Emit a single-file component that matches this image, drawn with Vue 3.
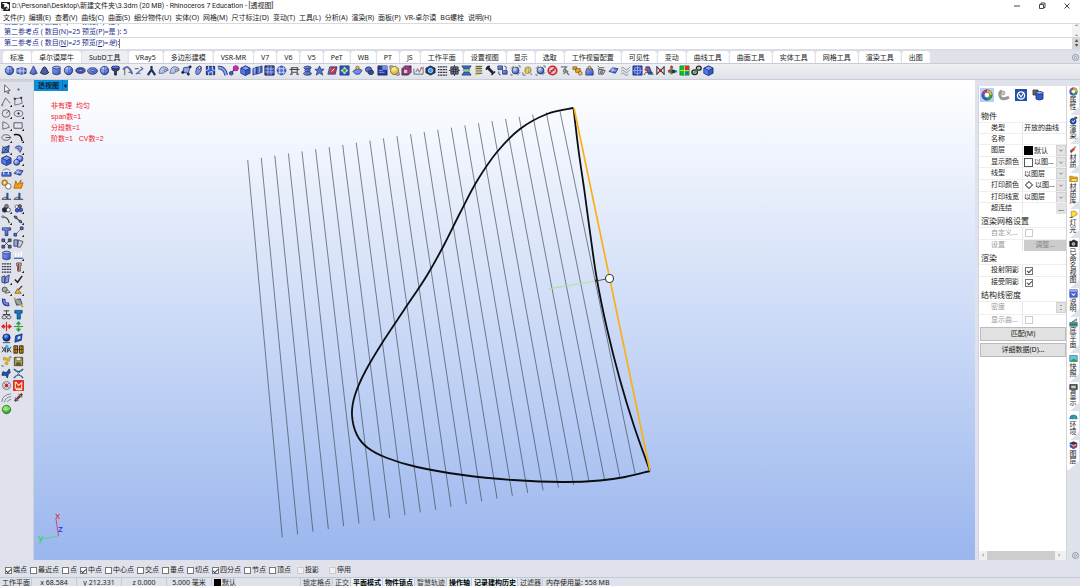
<script setup>
const menus = ['文件(F)', '编辑(E)', '查看(V)', '曲线(C)', '曲面(S)', '细分物件(U)', '实体(O)', '网格(M)', '尺寸标注(D)', '变动(T)', '工具(L)', '分析(A)', '渲染(R)', '面板(P)', 'VR-卓尔谟', 'BG螺栓', '说明(H)']
const tabs = ['标准', '卓尔谟犀牛', 'SubD工具', 'VRay5', '多边形建模', 'VSR-MR', 'V7', 'V6', 'V5', 'PeT', 'WB', 'PT', 'JS', '工作平面', '设置视图', '显示', '选取', '工作视窗配置', '可见性', '变动', '曲线工具', '曲面工具', '实体工具', '网格工具', '渲染工具', '出图']

const corner = '<path d="M12 9.5V12H9.5z" fill="#222"/>'
const ln = (d, c = '#333', w = 1) => `<path d="${d}" fill="none" stroke="${c}" stroke-width="${w}"/>`
const fl = (d, f = 'url(#gb)', s = '#1c2c66', w = 0.8) => `<path d="${d}" fill="${f}" stroke="${s}" stroke-width="${w}"/>`
const ci = (x, y, r, f = 'url(#gs)', s = '#1c2c66', w = 0.8) => `<circle cx="${x}" cy="${y}" r="${r}" fill="${f}" stroke="${s}" stroke-width="${w}"/>`
const el = (x, y, a, b, f = 'url(#gb)', s = '#1c2c66', w = 0.8) => `<ellipse cx="${x}" cy="${y}" rx="${a}" ry="${b}" fill="${f}" stroke="${s}" stroke-width="${w}"/>`

const icons = {
  ball: ci(6, 6, 4.6) + ln('M2 4.5Q6 7 10 4.5M6 1.5V10.5', '#33458c', 0.5),
  slab: fl('M1 4Q6 2 11 4V9Q6 11 1 9z') + ln('M1 6.5H11M4.5 3V10M8 3V10', '#dfe6ff', 0.8),
  cone: fl('M6 1L10 9Q6 12 2 9z'),
  conecut: fl('M4.5 3Q6 1 7.5 3L10.5 8.5Q6 12 1.5 8.5z', '#4a5ea8', '#151f4a', 1),
  cyl: fl('M2 2.5V9.5Q6 12 10 9.5V2.5z') + el(6, 2.8, 4, 1.5, '#9fb2ff'),
  ring: el(6, 6, 5, 3, '#4560c8', '#1a1f3c', 1) + el(6, 6, 2, 0.8, '#fff'),
  torus: el(6, 6.5, 5.4, 3.6) + el(6, 6, 2.4, 1, '#c7d0f5'),
  funnel: fl('M2 2H10V5L7 7V11H5V7L2 5z', '#33437e', '#111') + el(6, 2.5, 4, 1.5, '#5577e8'),
  arc: ln('M1 5Q5 0 8 4T11 10', '#5a6cae', 2) + ln('M3 4V11M7 8H11', '#555'),
  bridge: ln('M1 4H5M3 9H7M7 2L10 4L7 6', '#444') + ln('M2 10L9 4', '#5577dd', 1.4),
  legs: ln('M6 1V5L2 11M6 5L10 11', '#26325e', 2.4),
  patch: fl('M1 9Q2 1 7 2T11 6Q8 5 6 9z', '#b6c4f0', '#45558f') + ci(8, 6, 1.4, '#d8cfa0', '#555'),
  net: fl('M3 3L10 2L8 9L2 8z', '#8fa6f2', '#222c55') + ci(2, 8, 1.3, '#222') + ci(10, 2, 1.2, '#222') + ci(8, 10, 1.2, '#222'),
  tube: fl('M4 3Q7 0 9 2V6Q7 11 4 10.5Q2 9 4 3z', '#8297e6') + el(7, 3, 1.6, 1.6, '#dfe5ff'),
  grid: fl('M1.5 1.5H10.5V10.5H1.5z', '#3558c4', '#111d55', 1) + ln('M4 1V5L1 6M8 1V5L11 6M4 11V8L8 7V11', '#d6e0ff', 1),
  pipe: ln('M1 3Q8 2 10 11', '#2d3d80', 4) + ln('M1 3Q8 2 10 11', '#90a6ff', 2),
  magenta: ci(3.5, 9, 2, '#4d63cc') + ln('M4 8L8 4', '#444', 1.4) + ci(8.5, 3.5, 2.8, '#d22bb8', '#801070'),
  cube: fl('M6 1L11 3.5V9L6 11.5L1 9V3.5z', '#3355cc') + fl('M6 1L11 3.5L6 6L1 3.5z', '#7f9dff') + fl('M6 6V11.5L1 9V3.5z', '#5577ee', '#1c2c66', 0.5),
  boxes: fl('M1 4L6 2V9L1 11z') + fl('M5 3L11 1V8L5 10z', '#4d68c8') + ln('M8 2V9M3 3V10', '#cdd8ff', 0.7),
  boxgrid: fl('M1 1H11V11H1z', '#3a54b4', '#151c40', 1) + ln('M1 4.3H11M1 7.6H11M4.3 1V11M7.6 1V11', '#bdcbff', 0.8),
  globe: ci(6, 6, 4.8, '#5670d8') + ln('M1.5 4H10.5M1.5 8H10.5M4 1.5V10.5M8 1.5V10.5', '#e0e7ff', 0.8),
  car: ln('M0.5 5H11.5M2 3H10M3 3V10M9 3V10M3 8H9M1 10H4M8 10H11', '#444', 1.1),
  stack: el(6, 3, 4, 1.8) + el(6, 6, 3, 1.6) + el(6, 9.3, 4.4, 1.8),
  star: fl('M6 1L7.4 4.5L11 4.7L8.3 7L9.5 11L6 8.8L2.5 11L3.7 7L1 4.7L4.6 4.5z', '#5874dc'),
  redpane: fl('M3 2H11L9 10H1z', '#7186d8') + fl('M5 3H10L8 9H3z', '#e03a4c', '#a02030') + ln('M5 7L8 4', '#fff'),
  greenpane: fl('M1 1H11V11H1z', '#2f55c8') + fl('M6 2L8 5L10 6L7.5 7.5L6 10L4.5 7.5L2 6L4.5 5z', '#a6e070', '#fff', 0.5) + ci(6, 6, 1.3, '#1c8c38', 'none'),
  teapot: fl('M1 7Q6 2 11 6L8 10H4z', '#6f8af2') + ci(6, 3, 1.8, '#f0c030', '#806010'),
  lens: el(5, 5, 3.5, 3, '#5a72c8') + el(7.5, 8, 3, 2.5, '#39488b'),
  monitor: fl('M1 1H11V11H1z', '#253f98', '#151d44') + fl('M6 1H11V5H6z', '#6c8cff', '#aac', 0.4) + ln('M2 6H6M2 8H8', '#a9bcff', 0.8),
  yball: ci(6, 6, 4.5, 'url(#gy)', '#6a5610') + ln('M1 1V4M1 1H4M11 8V11H8', '#333', 0.8),
  magbox: fl('M1 4L4 1H11V8L8 11H1z', '#b03c9c', '#222') + fl('M2.5 4.5H7.5V9.5H2.5z', '#f0b8dc', '#222') + ln('M8 4L11 1', '#222', 0.8),
  curveplot: ln('M1 4V10H11V2M3 8L5 4L7 8L9 3', '#667') + ci(9.5, 3.5, 1.2, '#d66', 'none'),
  hex: fl('M6 1L11 3.5V8.5L6 11L1 8.5V3.5z', '#203f7c', '#111') + ci(6, 6, 2.4, '#3da0e8', '#d0e8ff'),
  dots: ln('M1 2H11M1 5H11M1 8H11M1 11H11', '#334', 1.5) + ln('M3 1V12M6 1V12M9 1V12', '#eef0f6', 0.6),
  gridball: fl('M2 2H10V10H2z', '#7383a6', '#222') + ln('M2 4.6H10M2 7.3H10M4.6 2V10M7.3 2V10', '#222', 0.8) + ln('M0 6H2M10 6H12M6 0V2M6 10V12', '#333'),
  layers: fl('M1 1H11L9 4H3z', '#4766d0') + fl('M2 5H10L9 7H3z', '#7fe0a0', '#3a8850', 0.5) + fl('M3 8H9L11 11H1z', '#4766d0'),
  list: ln('M3 1.5H10M3 4H10M3 6.5H10M3 9H10', '#333') + ln('M2 2.7H9M2 5.2H9M2 7.7H9M2 10.2H7', '#d8c24a'),
  wrench: ln('M2 2L9 9', '#223', 3) + ln('M1 5L5 1', '#223', 2) + ln('M7 11L11 7', '#223', 1.6),
  network: fl('M1 1H6V5H1z') + fl('M6 6H11V10H6z') + ln('M8 1Q11 1 10 5M4 11Q1 11 2 7', '#445'),
  selball: ci(6, 6, 3.8) + ln('M1 4L4 1M8 11L11 8M1 10V11H3M9 1H11V3', '#444', 0.8) + fl('M5 2L7 4L5 6z', '#f0d84a', 'none'),
  selyel: ci(6.5, 5.5, 3.5, 'url(#gy)', '#777') + fl('M4 5L7 3V9H4z', '#f4dc40', '#887020', 0.5) + ln('M1 8V11H4M10 9V11', '#444', 0.8),
  no: ci(6, 6, 4.6, '#e8c8cc', '#d02020', 1.8) + ln('M3 9L9 3', '#d02020', 1.6) + ln('M4 6H8', '#555', 1),
  filter: ln('M2 2H8L5 6V8M6 4L10 8M8 6L5 10M8 8L11 11', '#777', 1.5),
  bolt: fl('M1 2H5V5H1z', '#f0a820', '#785010') + fl('M4 4H9V8H4z', '#f0a820', '#785010') + ci(9, 9, 2, '#f8c850', '#785010'),
  hatbox: fl('M2 7L3 4H9L10 7V11H2z') + ci(6, 3, 1.7, '#e0c030', '#555'),
  bag: ln('M2 1L4 3H9M2 4L9 6M3 5V10H8L10 6z', '#555', 1) + ci(6, 8, 1.3, '#8899dd', '#444'),
  tiles: fl('M1 7L5 3L11 4L8 9z') + ln('M3 5L9 6.5M6 3.4L4 8', '#dde5ff', 0.7),
  waves: ln('M1 4Q3 1 5 4T9 4L11 2M1 7Q3 4 5 7T9 7L11 5M1 10Q3 7 5 10T9 10', '#7c8797', 1),
  target: fl('M1 1H11V11H1z', '#2f4fbd', '#1b2868') + ln('M6 1V11M1 6H11M3 3H9V9H3z', '#a8baff', 0.8),
  angle: fl('M3 2H7L10 10H6z', '#4c68c8') + ln('M1 11L3 8H10L11 11', '#333', 0.8) + ci(3.5, 5, 1.8, '#e03828', 'none'),
  cross: ln('M2 2L10 10M10 2L2 10M2 1V11M10 1V11', '#333', 1.1) + ci(6, 6, 1.6, '#d02030', 'none'),
  gumball: ln('M5 1V10M1 7H11', '#1d9c5c', 2.4) + fl('M3 3L5 0L7 3z', '#e02828', 'none') + fl('M1 6L4 4V10z', '#e02828', 'none') + ci(7, 7, 2, '#28344c', 'none'),
  map: fl('M1 1H11V11H1z', '#18b830', '#083') + fl('M6 1H11V6H6z', '#e02828', 'none') + ln('M1 6H11M6 1V11', '#d8ff60', 0.8) + fl('M7 8H10V10H7z', '#2060e0', 'none'),
  chain: el(4, 8, 3, 2.6, '#ccc', '#222', 1.4) + el(8.5, 3.5, 2.6, 2.2, '#ccc', '#222', 1.4) + ln('M3 9L7 5', '#38a040', 1.6),
  cursor: fl('M4 1V9L6 7.5L7.5 10.5L8.7 10L7.3 7H10z', '#fff', '#333'),
  point: '<rect x="5" y="5" width="2" height="2" fill="#555"/>',
  poly: ln('M1 10L5 2L10 8', '#444', 0.8) + ci(1.5, 10, 0.8, '#fff', '#333', 0.6) + corner,
  cpoly: ln('M2 10V3L9 2L10 8z', '#444', 0.7) + ci(2, 3, 0.9, '#333') + ci(9, 2, 0.9, '#333') + corner,
  circle: ci(5.5, 6, 4.2, 'none', '#444', 0.8) + ln('M5.5 6L9 3', '#333', 0.8) + corner,
  ellipse: el(6, 6, 4.6, 3.3, 'none', '#444', 0.8) + ci(6, 6, 0.9, '#333') + corner,
  arctri: ln('M2 10V2Q8 3 9 8z', '#444', 0.8) + corner,
  rect: ln('M1 3H10V9H1z', '#444', 0.9) + corner,
  oval: el(5.5, 6, 4.4, 3, 'none', '#444', 0.8) + ln('M5 6H11', '#333', 0.8) + corner,
  fillet: ln('M1 3Q9 1 10 10', '#111', 1.6) + corner,
  surf: fl('M2 4L9 2L8 9L1 10z') + ln('M1 2L10 10M9 1L2 10', '#223', 0.6) + corner,
  drape: fl('M2 4Q6 0 10 4L8 9Q6 4 2 4z', '#7e97e8') + ln('M2 3L8 10', '#b88', 0.7) + corner,
  blob: ci(7.5, 4, 3.3) + ci(4, 8, 3.3) + corner,
  spring: ln('M2 4Q6 0 10 4', '#777') + fl('M1 6H11V10H1z', '#4e70e8') + ln('M3 5V8M8 5V8', '#fff'),
  gears: ci(4, 4, 3, '#f2b030', '#6a4a10') + ci(8, 8, 3, '#ffffff', '#444') + ci(4, 4, 1, '#fff', 'none'),
  fire: fl('M1 10L3 2L5 6L9 1L8 5L11 4L9 10z', '#f2a010', '#9a5800'),
  trim: ln('M1 9H11', '#444', 1.2) + ln('M7 9V2', '#2c4aa0', 2.2) + ln('M1 9Q4 5 7 8', '#333', 0.8),
  hub: ci(4, 7.5, 2.6, '#222b40') + ci(8, 7.5, 2.2, '#fff', '#223') + ci(6, 3.5, 2, '#888', '#333') + corner,
  hub2: ci(4, 4, 1.8, '#fff', '#445') + ci(7.5, 3.5, 1.8, '#667', '#334') + ci(4.5, 8, 2, '#3c5ce0') + ci(8.5, 7.5, 2, '#3c5ce0') + corner,
  curve1: ln('M1 3Q8 3 9 10', '#333', 1.3) + ci(2, 3, 1.1, '#fff', '#333') + corner,
  curve2: ln('M1 2L10 10', '#333', 1.3) + ci(3, 3.5, 1.3, '#777') + ci(8, 8, 1.3, '#777') + corner,
  tee: fl('M1.5 2H10.5V4.5H7.5V10.5H4.5V4.5H1.5z'),
  pair: ln('M3 9L9 3', '#777') + fl('M1 8H4V11H1z', '#4f6bd8') + fl('M8 1H11V4H8z', '#4f6bd8') + corner,
  array: fl('M1 1H4V4H1zM8 1H11V4H8zM1 8H4V11H1zM8 8H11V11H8z', '#556bb8', '#223') + ln('M3 3L9 9M9 3L3 9', '#334', 0.8),
  fold: fl('M1 2H5V9H1z', '#9aa6c8') + fl('M6 2L11 4L8 10H5z', '#c8d0e8', '#334'),
  cards: fl('M1 3L4 2V10L1 9z', '#8fa0d8') + fl('M5 3L9 1L8 9L4 10z', '#7d96f0') + corner,
  comb: ln('M3 8V2M6 8V3M9 8V2', '#fff', 1.4) + ln('M1 9H11', '#4664b8', 1.4) + corner,
  tower: fl('M4 1H9V4H8V10H5V4H4z', '#b8b0aa', '#444') + ln('M6 2V9', '#c82828', 1.4) + corner,
  check: ln('M2 6L5 9L10 2', '#222', 1.6),
  shells: ci(4, 5, 2.7, '#aaa', '#333') + fl('M5 9Q6 3 10 8z', '#e8e8e8', '#333') + corner,
  paint: fl('M2 9L5 4L9 9z', '#f0b430', '#775010') + ln('M6 5L10 1', '#333', 1.4) + corner,
  bend: ln('M3 2Q2 9 9 8', '#2a3c96', 4) + ln('M3 3Q3 8 8 8', '#7b92ee', 1.6),
  sheet: fl('M2 3L8 2L10 8L4 9z', '#7b9ad8') + ln('M1 1L11 11', '#b8a850', 1.8),
  rig: ln('M3 2H9M6 2V6M2 6H10', '#333', 1) + el(3.5, 9, 2.4, 1.8, 'none', '#333') + el(8.5, 9, 2.4, 1.8, 'none', '#333'),
  hammer: fl('M2 1.5H10V4.5H8V11H4.5V4.5H2z', '#1976c4', '#0a3a70'),
  redarr: fl('M0 6L3.5 3V5H5V7H3.5V9zM12 6L8.5 3V5H7V7H8.5V9z', '#e02020', 'none') + ln('M6 1V11', '#e02020', 1.2),
  greenarr: fl('M6 0L9 3.5H7V5H5V3.5H3zM6 12L9 8.5H7V7H5V8.5H3z', '#2e9e3c', 'none') + ln('M1 6H11', '#2e9e3c', 1.2),
  darkball: ci(6, 5, 4, 'url(#gd)', '#0a1a50') + ln('M2 10.5H10', '#444'),
  bluebox: fl('M3 3L10 1L9 8L2 10z', '#2454c4', '#0c2464') + fl('M5 4L8 3V6L5 7z', '#cfe0ff', 'none'),
  mirror: ln('M1 3L5 9V3L1 9M11 3L7 9V3L11 9', '#333', 1) + fl('M5 1H8V5H5z', '#38b8f0', 'none'),
  honey: fl('M1 2H5V10H1zM7 2H11V10H7z', '#e29a20', '#33240a', 1) + ln('M1 6H11M3 2V10M9 2V10', '#33240a', 0.7),
  nodes: ci(4, 3, 1.6, '#f4c020', '#a88820') + ci(8, 4, 1.8, '#f4c020', '#a88820') + ci(6, 8, 1.6, '#f4c020', '#a88820') + ln('M1 10V11H3M9 1H11V2', '#444', 0.8),
  disk: fl('M1.5 1.5H10.5V10.5H1.5z', '#a9a05c', '#47431f', 1) + fl('M3.5 1.5H8.5V5H3.5z', '#ece8c8', '#47431f', 0.5) + fl('M3.5 7H8.5V10.5H3.5z', '#5c5830', 'none'),
  spark: fl('M2 4L6 5L9 1L10 5L8 7L7 11L5 8L1 8z', '#1d52b0', '#0c2a60'),
  xcurve: ln('M1 1Q6 7 11 1M1 11Q6 4 11 11', '#39597c', 1.6) + ln('M3 3L9 9M9 3L3 9', '#5c86b0', 1),
  atom: ci(6, 6, 4.5, '#c6c6c6', '#777') + ci(6, 6, 2.6, '#e03030', '#fff') + ln('M3 3L9 9M9 3L3 9', '#448', 0.6),
  redbox: fl('M0.5 0.5H11.5V11.5H0.5z', '#ef2436', '#c01020') + ln('M2.5 2V9H9.5V3L6 6L3 2M3 10.5H10', '#fff2a0', 1.2),
  offset: ln('M1 11Q1 3 11 2M4 11Q4 6 11 5M7 11Q7 9 11 8', '#758088', 1),
  tool: ln('M2 10L10 2', '#6d3838', 2.6) + ln('M2 6L6 10M6 2L10 6', '#777', 1.2),
  gball: ci(6, 6, 4.6, 'url(#gg)', '#1c6c1c') + ln('M2 5Q6 8 10 4', '#c4ffa0', 0.8),
  wheel: '<path d="M6 2A4 4 0 0 1 10 6" stroke="#e8d020" stroke-width="2.5" fill="none"/><path d="M10 6A4 4 0 0 1 6 10" stroke="#20b050" stroke-width="2.5" fill="none"/><path d="M6 10A4 4 0 0 1 2 6" stroke="#2060e8" stroke-width="2.5" fill="none"/><path d="M2 6A4 4 0 0 1 3.5 2.9" stroke="#b030d0" stroke-width="2.5" fill="none"/><path d="M3.5 2.9A4 4 0 0 1 6 2" stroke="#e83030" stroke-width="2.5" fill="none"/>' + ci(6, 6, 5.2, 'none', '#444', 0.6) + ci(6, 6, 2.8, '#fff', '#333', 0.6),
  snail: ln('M4 2Q1 3 2 7T9 9L11 8', '#999', 3) + ci(5, 4, 2, '#c6c6c6', '#999'),
  vbox: fl('M0 0H12V12H0z', '#2450a8', 'none') + ci(6, 6.5, 3.6, 'none', '#fff', 1.3) + ln('M4 5L6 8L9 3', '#fff', 1.2),
  cylinders: fl('M1 1H6V6H1z', '#666', '#333') + fl('M4 3.5V10Q7.5 12 11 10V3.5z', '#2e5bd0') + el(7.5, 3.8, 3.5, 1.3, '#9fb6ff'),
  vball: ci(5.5, 7, 4, '#2050b0', '#103070') + ln('M4 6L5.5 8.5L8 5', '#fff') + fl('M7 1H11V4H7z', '#555', 'none'),
  brush: ln('M9 2L6 5', '#888', 2) + ln('M7 5L2 9', '#d84020', 3.2) + ci(3, 9, 1.4, '#2c58b0', 'none'),
  folder: fl('M1 3H5L6 4H11V10H1z', '#e8a818', '#9c6c00') + fl('M2 10L4 6H12L10 10z', '#ffd860', '#9c6c00', 0.6),
  lamp: fl('M3 2Q7 0 10 3T8 8L3 9z', '#ffe040', '#887010') + ln('M1 10H5', '#555', 1.5),
  camera: fl('M1 3H4L5 1.5H8L9 3H11V10H1z', '#222', '#111') + ci(6, 6.5, 2, '#999', '#fff', 0.6),
  note: fl('M1 1H11V11H1z', '#4b63d8', '#3040a0') + fl('M1 1H11V3.5H1z', '#98a8f4', 'none') + ln('M3.5 6L6 8.5L8.5 6', '#fff', 1.4),
  plane: fl('M1 6H11V11H1z', '#44a088', '#247060') + fl('M4 5L10 1V4z', '#ccc', '#555') + ln('M1 8.5H11', '#2858a8', 1.2),
  photo: fl('M1 2H11V10H1z', '#5cc8e8', '#555') + fl('M1 10L6 6L11 9V10z', '#28a058', 'none'),
  screen: fl('M1 2H11V8.5H1z', '#555', '#222') + fl('M3 3.5H9V7H3z', '#ccc', 'none') + ln('M3 10.5H9', '#333', 1.4),
  dome: fl('M1 9A5 5 0 0 1 11 9z', '#2fb070', '#2050a0') + fl('M1 9A5 5 0 0 1 6 4V9z', '#3080e0', 'none'),
  leaf: fl('M1 3L6 1L11 3L6 5z', '#333', '#222') + fl('M1 4L6 6.5L11 4V8L6 11L1 8z', '#2c58d0', 'none') + fl('M3 4L6 6L11 4L10 8L6 9z', '#e03028', 'none') + ln('M4 5L6 7L9 5', '#fff', 0.8),
  gear: ci(6, 6, 4, 'none', '#8a93a8', 1.3) + ci(6, 6, 1.5, 'none', '#8a93a8', 1)
}

const groups = [
  ['ball', 'slab', 'cone', 'conecut', 'cyl', 'ball', 'ring', 'torus', 'ball', 'funnel', 'arc', 'bridge', 'legs', 'patch', 'patch', 'net', 'tube', 'grid', 'pipe', 'magenta', 'cube', 'boxes', 'boxgrid', 'globe'],
  ['car', 'stack', 'star', 'redpane', 'greenpane', 'teapot', 'lens'],
  ['monitor', 'yball', 'magbox', 'curveplot', 'hex', 'dots', 'gridball', 'layers', 'list', 'wrench', 'network'],
  ['selball', 'selyel', 'selball', 'no', 'filter'],
  ['bolt', 'hatbox', 'bag', 'tiles', 'waves', 'target', 'angle', 'cross', 'gumball', 'map', 'chain', 'cube']
]
const tools = ['cursor', 'point', 'poly', 'cpoly', 'circle', 'ellipse', 'arctri', 'rect', 'oval', 'fillet', 'surf', 'drape', 'cube', 'blob', 'spring', 'tiles', 'gears', 'fire', 'trim', 'trim', 'hub', 'hub2', 'curve1', 'curve2', 'tee', 'pair', 'array', 'fold', 'cyl', 'comb', 'dots', 'tower', 'cards', 'check', 'shells', 'paint', 'bend', 'sheet', 'rig', 'hammer', 'redarr', 'greenarr', 'darkball', 'bluebox', 'mirror', 'honey', 'nodes', 'disk', 'spark', 'xcurve', 'atom', 'redbox', 'offset', 'tool', 'gball']

const sections = [
  { title: '物件', big: true, rows: [
    { label: '类型', text: '开放的曲线' },
    { label: '名称', kind: 'text' },
    { label: '图层', kind: 'select', swatch: 'black', text: '默认' },
    { label: '显示颜色', kind: 'select', swatch: 'white', text: '以图...' },
    { label: '线型', kind: 'select', text: '以图层' },
    { label: '打印颜色', kind: 'select', swatch: 'diamond', text: '以图...' },
    { label: '打印线宽', kind: 'select', text: '以图层' },
    { label: '超连结', kind: 'more' }
  ] },
  { title: '渲染网格设置', rows: [
    { label: '自定义...', kind: 'check', off: true },
    { label: '设置', kind: 'button', off: true, text: '调整...' }
  ] },
  { title: '渲染', rows: [
    { label: '投射阴影', kind: 'check', on: true },
    { label: '接受阴影', kind: 'check', on: true }
  ] },
  { title: '结构线密度', rows: [
    { label: '密度', kind: 'spin', off: true },
    { label: '显示曲...', kind: 'check', off: true }
  ] }
]
const panelIcons = ['wheel', 'snail', 'vbox', 'cylinders']
const sideTabs = [['wheel', '属性'], ['vball', '渲染'], ['brush', '材质'], ['folder', '材质库'], ['lamp', '灯光'], ['camera', '已命名视图'], ['note', '说明'], ['plane', '底平面'], ['photo', '快照'], ['screen', '显示'], ['dome', '环境'], ['leaf', '图层']]

const snaps = [['端点', 1], ['最近点', 0], ['点', 0], ['中点', 1], ['中心点', 0], ['交点', 0], ['垂点', 0], ['切点', 0], ['四分点', 1], ['节点', 0], ['顶点', 0], ['投影', 0, 1], ['停用', 0, 1]]
const modes = [['锁定格点'], ['正交'], ['平面模式', 1], ['物件锁点', 1], ['智慧轨迹'], ['操作轴', 1], ['记录建构历史', 1], ['过滤器']]

const rulings = Array.from({ length: 24 }, (_, i) => ({
  x1: 247.7 + i * 13.57, y1: 160 - i * 2.16, x2: 282.3 + i * 15.34, y2: 537.3 - i * 2.76
}))

function spline(p) {
  let d = `M${p[0]}`
  for (let i = 0; i < p.length - 1; i++) {
    const a = p[i - 1] || p[i], b = p[i], c = p[i + 1], e = p[i + 2] || c
    d += `C${b[0] + (c[0] - a[0]) / 6},${b[1] + (c[1] - a[1]) / 6} ${c[0] - (e[0] - b[0]) / 6},${c[1] - (e[1] - b[1]) / 6} ${c}`
  }
  return d
}
const profile = spline([[573.5, 108], [547, 114], [520, 129], [497, 152], [477, 181], [460, 213], [444, 245], [426, 277], [404, 310], [384, 340], [366, 370], [355, 395], [352, 415], [357, 435], [368, 448], [387, 458], [417, 467], [463, 475], [513, 480], [563, 482], [600, 480.5], [625, 477], [650, 471]])
const edge = spline([[573.5, 108], [578.5, 150], [584.3, 190], [590.4, 235], [597, 280], [607.3, 330], [620, 380], [634, 426], [650, 471]])
</script>

<template>
  <div class="app">
    <svg class="defs" aria-hidden="true">
      <defs>
        <radialGradient id="gs" cx=".35" cy=".3" r=".8"><stop offset="0" stop-color="#d5dfff" /><stop offset=".5" stop-color="#6f8df0" /><stop offset="1" stop-color="#2a3f96" /></radialGradient>
        <linearGradient id="gb" x2="1" y2="1"><stop offset="0" stop-color="#8fa8ff" /><stop offset="1" stop-color="#3450b4" /></linearGradient>
        <radialGradient id="gy" cx=".4" cy=".3" r=".8"><stop offset="0" stop-color="#fff6a0" /><stop offset="1" stop-color="#c8a020" /></radialGradient>
        <radialGradient id="gd" cx=".4" cy=".3" r=".8"><stop offset="0" stop-color="#8fc0ff" /><stop offset=".5" stop-color="#1646b0" /><stop offset="1" stop-color="#08184c" /></radialGradient>
        <radialGradient id="gg" cx=".4" cy=".3" r=".8"><stop offset="0" stop-color="#a8f070" /><stop offset="1" stop-color="#188c20" /></radialGradient>
      </defs>
    </svg>

    <header class="title">
      <svg class="logo" viewBox="0 0 10 10"><path d="M0 0H10V10H0z" fill="#222" /><path d="M1 1L4 3L3 6L6 5L9 8V3L6 1z" fill="#fff" /><path d="M0 7L3 8L2 10H0zM7 6L8 9L5 8z" fill="#ddd" /></svg>
      <span class="caption">D:\Personal\Desktop\新建文件夹\3.3dm (20 MB) - Rhinoceros 7 Education - [透视图]</span>
      <div class="winbtns">
        <button aria-label="最小化"><svg viewBox="0 0 8 8"><path d="M1 4H7" /></svg></button>
        <button aria-label="还原"><svg viewBox="0 0 8 8"><path d="M1.5 2.5H5.5V6.5H1.5zM3 2.5V1H7V5.5H5.5" /></svg></button>
        <button aria-label="关闭"><svg viewBox="0 0 8 8"><path d="M1.5 1.5L6.5 6.5M6.5 1.5L1.5 6.5" /></svg></button>
      </div>
    </header>

    <nav class="menu"><button v-for="m in menus" :key="m">{{ m }}</button></nav>

    <section class="cmd">
      <div class="history">
        <div class="lines">
          <p>第二参考点 ( 数目(N)=25 预览(P)=是 ): 5</p>
          <p>第二参考点 ( 数目(N)=25 预览(P)=是 ): 5</p>
        </div>
        <div class="scroll"><span>⌃</span><span>⌄</span></div>
      </div>
      <div class="prompt">
        <label for="cmd">第二参考点 ( 数目(<u>N</u>)=<i>25</i> 预览(<u>P</u>)=<i>是</i>):</label>
        <input id="cmd" type="text">
        <div class="scroll dark"><span>▴</span><span>▾</span></div>
      </div>
    </section>

    <nav class="tabs">
      <button v-for="t in tabs" :key="t" :class="{ active: t === 'SubD工具' }">{{ t }}</button>
      <button class="cog" aria-label="选项"><svg viewBox="0 0 12 12" v-html="icons.gear" /></button>
    </nav>

    <div class="toolbar">
      <div v-for="(g, i) in groups" :key="i" class="group" :class="'g' + i">
        <button v-for="(n, j) in g" :key="j" :aria-label="n"><svg viewBox="0 0 12 12" v-html="icons[n]" /></button>
      </div>
    </div>

    <main class="body">
      <aside class="tools">
        <div class="toolgrid">
          <button v-for="(n, j) in tools" :key="j" :aria-label="n"><svg viewBox="0 0 12 12" v-html="icons[n]" /></button>
        </div>
      </aside>

      <section class="view">
        <svg class="scene" viewBox="34 80 941 480" preserveAspectRatio="xMidYMid meet">
          <line v-for="(r, i) in rulings" :key="i" v-bind="r" stroke="#3a4250" stroke-width=".65" />
          <path :d="profile" class="heavy" />
          <path :d="edge" class="heavy" />
          <path d="M548 289L596 281" stroke="#a8e890" />
          <path d="M596 281L606 279" stroke="#555" />
          <circle cx="596.500" cy="280.500" r="1.500" />
          <path d="M574 108L650 471" stroke="#f9b016" stroke-width="1.700" />
          <circle cx="609.500" cy="278.500" r="4" fill="#fff" stroke="#444" stroke-width="1.200" />
          <path d="M58.500 536L56 519" stroke="#c0506c" />
          <path d="M58.500 536L42 539" stroke="#62cf88" />
          <text x="55" y="519" fill="#e8202c">x</text>
          <text x="58" y="532" fill="#2428e8">z</text>
          <text x="38" y="541" fill="#20d838">y</text>
        </svg>
        <div class="vp"><button>透视图</button><button class="drop" aria-label="视图菜单">▾</button></div>
        <div class="info"><p>非有理&nbsp; 均匀</p><p>span数=1</p><p>分段数=1</p><p>阶数=1&nbsp;&nbsp; CV数=2</p></div>
      </section>

      <aside class="side">
        <div class="panel">
          <div class="pages">
            <button v-for="(n, i) in panelIcons" :key="n" :class="{ sel: i === 0 }" :aria-label="n"><svg viewBox="0 0 12 12" v-html="icons[n]" /></button>
          </div>
          <section v-for="(s, si) in sections" :key="s.title">
            <h2>{{ s.title }}</h2>
            <div class="rows" :class="{ big: s.big }">
              <div v-for="(r, ri) in s.rows" :key="r.label" class="row" :class="{ off: r.off }">
                <label :for="`f${si}-${ri}`">{{ r.label }}</label>
                <div class="val">
                  <span v-if="r.swatch" class="swatch" :class="r.swatch" />
                  <output v-if="!r.kind" :id="`f${si}-${ri}`">{{ r.text }}</output>
                  <input v-else-if="r.kind === 'text'" :id="`f${si}-${ri}`" type="text">
                  <input v-else-if="r.kind === 'check'" :id="`f${si}-${ri}`" type="checkbox" :checked="r.on" :disabled="r.off">
                  <template v-else-if="r.kind === 'select'">
                    <select :id="`f${si}-${ri}`"><option>{{ r.text }}</option></select>
                    <svg class="chev" viewBox="0 0 10 10"><path d="M3 4L5 6L7 4" /></svg>
                  </template>
                  <button v-else-if="r.kind === 'more'" :id="`f${si}-${ri}`" class="more">...</button>
                  <button v-else-if="r.kind === 'button'" :id="`f${si}-${ri}`" class="adjust" disabled>{{ r.text }}</button>
                  <template v-else>
                    <input :id="`f${si}-${ri}`" type="text" disabled>
                    <svg class="chev" viewBox="0 0 10 10"><path d="M4 3L5 2L6 3M4 7L5 8L6 7" /></svg>
                  </template>
                </div>
              </div>
            </div>
          </section>
          <button class="wide">匹配(M)</button>
          <button class="wide">详细数据(D)...</button>
          <div class="hscroll"><span>‹</span><i /><span>›</span></div>
        </div>
        <nav class="vtabs">
          <button v-for="t in sideTabs" :key="t[1]">
            <svg viewBox="0 0 12 12" v-html="icons[t[0]]" />
            <span v-for="c in t[1]" :key="c">{{ c }}</span>
          </button>
          <svg class="vcog" viewBox="0 0 12 12" v-html="icons.gear" />
        </nav>
      </aside>
    </main>

    <div class="osnap">
      <label v-for="s in snaps" :key="s[0]" :class="{ dis: s[2] }"><input type="checkbox" :checked="!!s[1]" :disabled="!!s[2]">{{ s[0] }}</label>
    </div>

    <footer class="status">
      <button class="plane">工作平面</button>
      <span class="coord">x 68.584</span>
      <span class="coord">y 212.331</span>
      <span class="coord">z 0.000</span>
      <span class="coord">5.000 毫米</span>
      <button class="layer"><span class="swatch black" />默认</button>
      <button v-for="m in modes" :key="m[0]" class="mode" :class="{ on: m[1] }">{{ m[0] }}</button>
      <span class="mem">内存使用量: 558 MB</span>
    </footer>
  </div>
</template>

<style>
html, body { margin: 0; background: #dfe2ea; }
</style>

<style scoped>
.app { display: flex; flex-direction: column; height: 100vh; overflow: hidden; background: #dfe2ea; color: #222; font: 7px/10px "Noto Sans", "Noto Sans CJK SC", sans-serif; }
.app * { box-sizing: border-box; }
.defs { position: absolute; width: 0; height: 0; }
button, input, select { font: inherit; color: inherit; background: none; border: 0; padding: 0; margin: 0; min-width: 0; border-radius: 0; white-space: nowrap; }
p, h2 { margin: 0; font-weight: normal; }
svg { display: block; }

.title { display: flex; align-items: center; flex: none; height: 12px; padding-left: 1px; background: #fff; font: 7px/12px Roboto, "Noto Sans CJK SC", sans-serif; }
.logo { width: 9px; height: 9px; margin-right: 2px; }
.caption { white-space: nowrap; flex: 1; }
.winbtns { display: flex; gap: 17px; padding-right: 9px; }
.winbtns svg { width: 8px; height: 8px; fill: none; stroke: #444; stroke-width: 1; }

.menu { display: flex; gap: 4px; flex: none; height: 11px; padding-left: 3px; background: #fff; }

.cmd { flex: none; border-top: 1px solid #d8dae2; border-bottom: 2px solid #dadde6; background: #fff; color: #23308c; }
.history { display: flex; height: 14px; border-bottom: 1px solid #d4d7e0; }
.lines { display: flex; flex-direction: column; justify-content: flex-end; flex: 1; overflow: hidden; padding-left: 4px; }
.prompt { display: flex; height: 11px; padding-left: 4px; }
.prompt label { white-space: pre; }
.prompt input { flex: 1; border-left: 1px solid #777; margin: 1px 0; outline: 0; }
.scroll { display: flex; flex-direction: column; width: 8px; background: #f2f2f4; color: #444; font-size: 6px; line-height: 7px; text-align: center; }
.scroll.dark { background: #d8d8da; line-height: 5px; }

.tabs { display: flex; flex: none; gap: 1px; height: 13px; padding-left: 3px; border-bottom: 1px solid #c8ccd6; }
.tabs button { padding: 0 7px; background: #fff; clip-path: polygon(0 100%, 0 2px, 2px 0, calc(100% - 2px) 0, 100% 2px, 100% 100%); line-height: 13px; }
.tabs .active { background: #eceef3; }
.tabs .cog { margin-left: auto; padding: 0; background: none; }
.cog svg { width: 9px; height: 9px; }

.toolbar { display: flex; align-items: flex-start; flex: none; gap: 2px; height: 16px; padding: 1px 0 0 4px; background: linear-gradient(#eff0f4, #dfe2e9); border-bottom: 1px solid #c8ccd6; }
.group { display: flex; justify-content: space-between; }
.group svg, .toolgrid svg { width: 11px; height: 11px; }
.g0 { width: 283px; }
.g1 { width: 86px; }
.g2 { width: 131px; }
.g3 { width: 60px; }
.g4 { width: 142px; }

.body { display: flex; flex: 1; min-height: 0; }
.tools { width: 34px; flex: none; border-top: 2px solid #cfd3dd; padding: 2px 0 0 1px; border-right: 1px solid #cdd1db; }
.toolgrid { display: grid; grid-template-columns: 12px 12px; grid-template-rows: repeat(28, 1fr); height: 331px; }
.toolgrid button { display: flex; align-items: center; }

.view { position: relative; flex: 1; min-width: 0; background: linear-gradient(#fff 0, #fcfdff 3%, #9ab6ee 100%); overflow: hidden; }
.scene { width: 100%; height: 100%; fill: none; }
.scene text { font: 9px "DejaVu Sans", sans-serif; stroke: none; }
.scene circle { fill: #222; }
.scene circle[stroke] { fill: #fff; }
.heavy { stroke: #0c0e12; stroke-width: 1.8px; }
.vp { position: absolute; left: 0; top: 0; display: flex; height: 11px; background: #0b8fd8; color: #08233c; font-weight: bold; }
.vp button { padding: 0 3px 0 4px; }
.vp .drop { padding: 0; width: 6px; border-left: 1px solid #0873b4; font-size: 6px; }
.info { position: absolute; left: 17px; top: 20px; color: #f5222d; font: 7px/11px "Liberation Sans", "Noto Sans CJK SC", sans-serif; }
.info p { height: 11px; }

.side { display: flex; width: 105px; flex: none; padding: 6px 0 0 3px; }
.panel { display: flex; flex-direction: column; width: 89px; background: #fff; border: 1px solid #d0d4de; border-width: 0 1px 0 1px; }
.pages { display: flex; gap: 3px; height: 23px; padding: 2px 0 0 1px; }
.pages button { display: grid; place-items: center; width: 14px; height: 14px; }
.pages .sel { background: #b7cdfb; }
.pages svg { width: 12px; height: 12px; }
.panel h2 { font-size: 8px; line-height: 13px; padding-left: 2px; }
.rows { display: grid; height: 24px; }
.rows.big { height: 92px; }
.row { display: grid; grid-template-columns: 44px 1fr; border-top: 1px solid #eee; min-height: 0; }
.row label { padding-left: 12px; border-right: 1px solid #e6e6e6; white-space: nowrap; }
.off { color: #999; }
.val { display: flex; align-items: center; min-width: 0; padding-left: 1px; gap: 1px; }
.val output { white-space: nowrap; }
.val select, .val input[type=text] { flex: 1; width: 0; appearance: none; height: 10px; }
.swatch { flex: none; width: 9px; height: 9px; border: 1px solid #555; background: #fff; }
.swatch.black { background: #000; border-color: #000; }
.swatch.diamond { width: 6px; height: 6px; margin: 0 2px; transform: rotate(45deg); }
.chev { flex: none; width: 10px; height: 11px; background: #e3e3e3; border: 1px solid #d2d2d2; fill: none; stroke: #666; }
input[type=checkbox] { appearance: none; display: grid; place-items: center; flex: none; width: 7px; height: 7px; border: 1px solid #777; background: #fff; }
input[type=checkbox]:checked::after { content: ""; width: 2px; height: 4px; margin-bottom: 1px; border: solid #444; border-width: 0 1px 1px 0; box-sizing: content-box; transform: rotate(45deg); }
input[type=checkbox]:disabled { border-color: #ccc; background: #eee; }
.row input[type=checkbox] { width: 8px; height: 8px; margin-left: 1px; }
.row input[type=checkbox]:disabled { background: #fff; }
.more { width: 10px; height: 11px; margin-left: auto; background: #e3e3e3; line-height: 8px; }
.adjust { flex: 1; height: 11px; background: #ccc; color: #888; }
.wide { flex: none; height: 14px; margin: 2px 0 0 1px; background: #e1e1e1; border: 1px solid #bbb; }
.hscroll { display: flex; align-items: stretch; height: 9px; margin-top: auto; background: #f0f0f0; color: #777; line-height: 8px; }
.hscroll span { width: 8px; text-align: center; }
.hscroll i { flex: 0 1 68px; background: #cdcdcd; }
.vtabs { display: flex; flex-direction: column; flex: 1; }
.vtabs button { display: flex; flex-direction: column; align-items: center; width: 12px; padding: 1px 0 6px; margin-bottom: -1px; background: #fff; clip-path: polygon(0 0, 100% 0, 100% calc(100% - 9px), 2px 100%, 0 100%); line-height: 7px; }
.vtabs button svg { width: 9px; height: 9px; }
.vcog { width: 9px; height: 9px; margin: auto 0 0 4px; }

.osnap { display: flex; align-items: center; flex: none; gap: 3px; height: 15px; margin-top: 2px; padding: 1px 0 0 5px; }
.osnap label { display: flex; align-items: center; gap: 1px; white-space: nowrap; }
.osnap .dis { margin: 0 4px 0 3px; }

.status { display: flex; flex: none; height: 9px; border-top: 1px solid #c4c8d2; line-height: 9px; white-space: nowrap; overflow: hidden; }
.status > * { border-right: 1px solid #c4c8d2; line-height: 9px; }
.status .plane { padding: 0 2px; width: 32px; }
.coord { width: 45px; text-align: center; }
.status .layer { display: flex; align-items: center; gap: 1px; width: 89px; padding-left: 2px; }
.layer .swatch { width: 7px; height: 7px; }
.status .mode { padding: 0 1px 0 2px; color: #333; }
.status .on { font-weight: bold; background: #e6f2f8; color: #000; }
.status .mem { padding-left: 3px; border: 0; }
</style>
